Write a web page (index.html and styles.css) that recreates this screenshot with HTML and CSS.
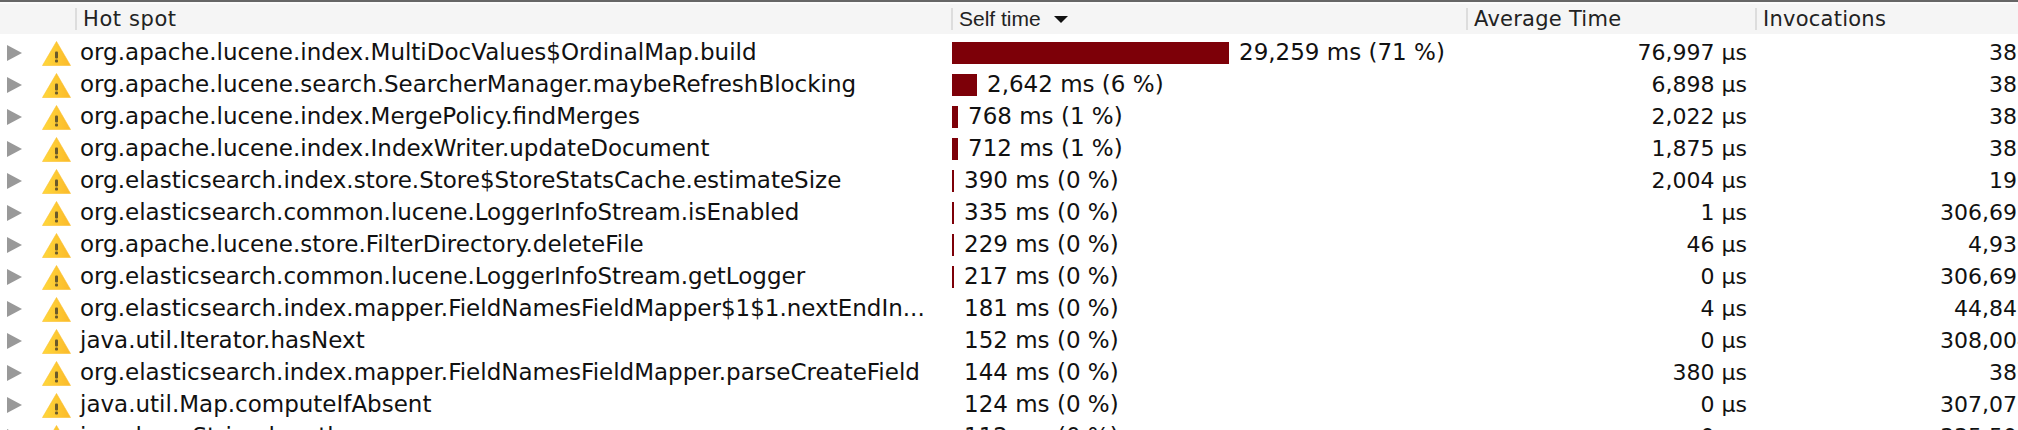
FILE: index.html
```html
<!DOCTYPE html>
<html lang="en">
<head>
    <meta charset="UTF-8">
    <title>Hot spots</title>
    <link rel="stylesheet" href="styles.css">
</head>
<body>
    <div class="table">
        <div class="row header">
            <div class="cell first"></div>
            <div class="cell name"><span class="head-label">Hot spot</span></div>
            <div class="cell self"><span class="head-label self-label">Self time</span><span class="sort-arrow"></span></div>
            <div class="cell avg"><span class="head-label">Average Time</span></div>
            <div class="cell calls"><span class="head-label">Invocations</span></div>
        </div>
        <div id="rows"></div>
    </div>

    <script>
        const hotSpots = [
            ['org.apache.lucene.index.MultiDocValues$OrdinalMap.build', 277, '29,259 ms (71 %)', '76,997 µs', '380'],
            ['org.apache.lucene.search.SearcherManager.maybeRefreshBlocking', 25, '2,642 ms (6 %)', '6,898 µs', '380'],
            ['org.apache.lucene.index.MergePolicy.findMerges', 6, '768 ms (1 %)', '2,022 µs', '380'],
            ['org.apache.lucene.index.IndexWriter.updateDocument', 6, '712 ms (1 %)', '1,875 µs', '380'],
            ['org.elasticsearch.index.store.Store$StoreStatsCache.estimateSize', 2, '390 ms (0 %)', '2,004 µs', '195'],
            ['org.elasticsearch.common.lucene.LoggerInfoStream.isEnabled', 2, '335 ms (0 %)', '1 µs', '306,692'],
            ['org.apache.lucene.store.FilterDirectory.deleteFile', 2, '229 ms (0 %)', '46 µs', '4,936'],
            ['org.elasticsearch.common.lucene.LoggerInfoStream.getLogger', 2, '217 ms (0 %)', '0 µs', '306,692'],
            ['org.elasticsearch.index.mapper.FieldNamesFieldMapper$1$1.nextEndIn...', 0, '181 ms (0 %)', '4 µs', '44,840'],
            ['java.util.Iterator.hasNext', 0, '152 ms (0 %)', '0 µs', '308,004'],
            ['org.elasticsearch.index.mapper.FieldNamesFieldMapper.parseCreateField', 0, '144 ms (0 %)', '380 µs', '380'],
            ['java.util.Map.computeIfAbsent', 0, '124 ms (0 %)', '0 µs', '307,072'],
            ['java.lang.String.length', 0, '112 ms (0 %)', '0 µs', '335,504']
        ];

        const warningIcon = `<svg class="warn" width="29" height="25" viewBox="0 0 29 25">
            <defs><linearGradient id="warnFill" x1="0" x2="1" y1="0" y2="0">
                <stop offset="0" stop-color="#ffd83a"/><stop offset="1" stop-color="#fbb92b"/>
            </linearGradient></defs>
            <path d="M14.5 0.5 L28.5 24.5 L0.5 24.5 Z" fill="url(#warnFill)" stroke="#fbc02d" stroke-width="0.6" stroke-linejoin="round"/>
            <rect x="13" y="10.5" width="3" height="7" rx="1" fill="#6a5a2a"/>
            <rect x="13" y="18.5" width="3" height="3" rx="1" fill="#6a5a2a"/>
        </svg>`;

        // Build one row per hot spot
        document.getElementById('rows').innerHTML = hotSpots.map(([name, bar, self, avg, calls]) => `
            <div class="row">
                <div class="cell first"><span class="expander"></span>${warningIcon}</div>
                <div class="cell name">${name}</div>
                <div class="cell self">${bar ? `<span class="bar" style="width: ${bar}px"></span>` : ''}<span class="self-text ${bar ? '' : 'no-bar'}">${self}</span></div>
                <div class="cell avg">${avg}</div>
                <div class="cell calls">${calls}</div>
            </div>`).join('');
    </script>
</body>
</html>
```

FILE: styles.css
```css
html, body {
    margin: 0;
    height: 430px;
    overflow: hidden;
    background-color: white;
}
body {
    font-family: "DejaVu Sans", sans-serif;
    font-size: 23px;
    color: #111;
}
.table {
    width: 2039px;
    height: 428px;
    overflow: hidden;
    border-top: 2px solid #666;
}
.row {
    display: grid;
    grid-template-columns: 75px 876px 515px 289px 284px;
    height: 32px;
    align-items: center;
}
.header {
    height: 30px;
    border-top: 2px solid #fbfbfb;
    background-color: #f5f5f5;
    font-size: 21px;
    color: #222;
}
#rows {
    padding-top: 3px;
}
.cell {
    display: flex;
    align-items: center;
    white-space: nowrap;
}
.first {
    gap: 20px;
    padding-left: 7px;
}
.name {
    padding-left: 5px;
    padding-bottom: 2px;
}
.self {
    padding-left: 1px;
}
.self-text {
    margin-bottom: 2px;
}
.header .cell:not(.first) {
    height: 22px;
    padding-left: 6px;
    padding-bottom: 0;
    border-left: 2px solid #ddd;
}
.head-label {
    letter-spacing: 0.25px;
}
.header .name .head-label {
    letter-spacing: 0.6px;
}
.self-label {
    font-family: "Liberation Sans", sans-serif;
    font-size: 21px;
    letter-spacing: 0;
}
.avg, .calls {
    justify-content: flex-end;
    font-size: 22px;
    padding-right: 8px;
    padding-bottom: 2px;
}
.header .avg, .header .calls {
    justify-content: flex-start;
    font-size: 21px;
}
.expander {
    width: 0;
    height: 0;
    border-left: 15px solid #999;
    border-top: 8px solid transparent;
    border-bottom: 8px solid transparent;
}
.warn {
    flex-shrink: 0;
}
.bar {
    height: 22px;
    margin-right: 10px;
    background-color: #7d0008;
}
.no-bar {
    padding-left: 12px;
}
.sort-arrow {
    margin-left: 13px;
    border-top: 7px solid #111;
    border-left: 7px solid transparent;
    border-right: 7px solid transparent;
}
```
